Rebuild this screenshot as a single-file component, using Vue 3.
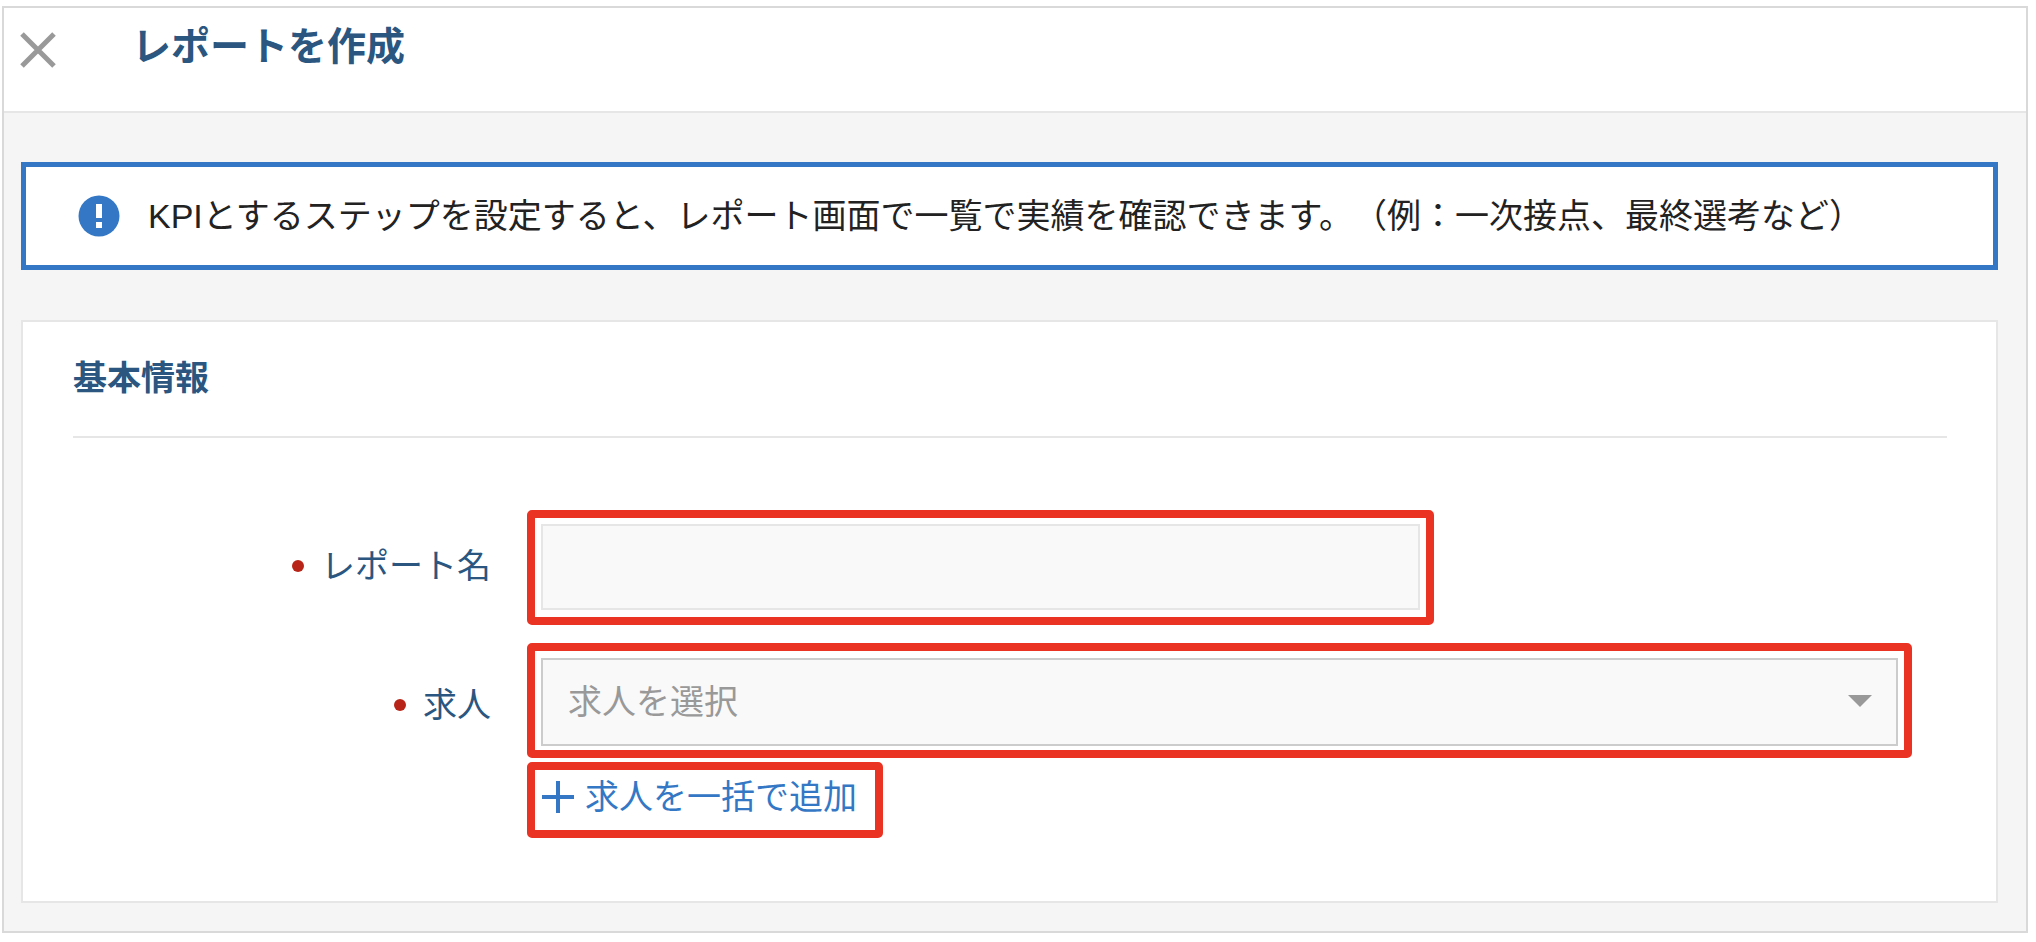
<script setup>
import { ref } from 'vue'

const reportName = ref('')
const job = ref('')
</script>

<template>
  <main class="modal">
    <header class="modal-header">
      <button class="close" type="button" aria-label="閉じる">
        <svg width="36" height="36" viewBox="0 0 36 36" aria-hidden="true">
          <path d="M2 2 34 34M34 2 2 34" fill="none" stroke="#999" stroke-width="5" />
        </svg>
      </button>
      <h1 class="title">レポートを作成</h1>
    </header>

    <div class="content">
      <div class="notice" role="note">
        <svg class="notice-icon" width="42" height="42" viewBox="0 0 42 42" aria-hidden="true">
          <circle cx="21" cy="21" r="20.5" fill="#3478c5" />
          <path d="M18 9h6v14h-6zM18 27h6v6h-6z" fill="#fff" />
        </svg>
        <p class="notice-text">KPIとするステップを設定すると、レポート画面で一覧で実績を確認できます。（例：一次接点、最終選考など）</p>
      </div>

      <section class="card">
        <h2 class="card-title">基本情報</h2>
        <form class="form" @submit.prevent>
          <div class="row">
            <label class="label" for="report-name"><span class="required"></span>レポート名</label>
            <div class="frame frame-name">
              <input id="report-name" v-model="reportName" class="control" type="text" />
            </div>
          </div>
          <div class="row row-job">
            <label class="label" for="job"><span class="required"></span>求人</label>
            <div class="fields">
              <div class="frame frame-job">
                <select id="job" v-model="job" class="control control-select">
                  <option value="">求人を選択</option>
                </select>
                <svg class="arrow" width="24" height="12" viewBox="0 0 24 12" aria-hidden="true">
                  <path d="M0 0h24L12 12z" fill="#999" />
                </svg>
              </div>
              <div class="frame frame-add">
                <button class="add" type="button">
                  <svg width="32" height="32" viewBox="0 0 32 32" aria-hidden="true">
                    <path d="M16 0v32M0 16h32" fill="none" stroke="#3478c5" stroke-width="4" />
                  </svg>
                  求人を一括で追加
                </button>
              </div>
            </div>
          </div>
        </form>
      </section>
    </div>
  </main>
</template>

<style>
body {
  background: #fff;
}
</style>

<style scoped>
* {
  box-sizing: border-box;
}

.modal {
  margin: 6px 8px 9px 2px;
  border: 2px solid #d9d9d9;
  background: #f5f5f5;
  color: #222;
  font-family: "Liberation Sans", "Noto Sans CJK JP", sans-serif;
  font-size: 34px;
  line-height: 48px;
  text-spacing-trim: space-all;
}

h1,
h2,
p {
  margin: 0;
}

button,
input,
select {
  font: inherit;
}

.modal-header {
  display: flex;
  align-items: flex-start;
  gap: 76px;
  padding: 12px 16px 37px;
  border-bottom: 2px solid #e6e6e6;
  background: #fff;
}

.close {
  display: flex;
  margin-top: 12px;
  padding: 0;
  border: 0;
  background: none;
  cursor: pointer;
}

.title {
  color: #2a567f;
  font-size: 39px;
  line-height: 54px;
  font-weight: 700;
}

.content {
  padding: 49px 28px 28px 17px;
}

.notice {
  display: flex;
  align-items: center;
  gap: 28px;
  padding: 25px 51px 25px 52px;
  border: 5px solid #3478c5;
  background: #fff;
}

.notice-icon {
  flex: none;
}

.card {
  margin-top: 50px;
  padding: 32px 49px 63px 50px;
  border: 2px solid #e6e6e6;
  background: #fff;
}

.card-title {
  padding-bottom: 34px;
  border-bottom: 2px solid #e6e6e6;
  color: #2a567f;
  font-size: 34px;
  font-weight: 700;
}

.form {
  display: flex;
  flex-direction: column;
  gap: 18px;
  margin-top: 72px;
  padding-right: 35px;
}

.row {
  display: grid;
  grid-template-columns: 418px minmax(0, 1fr);
  column-gap: 36px;
  align-items: start;
}

.label {
  display: flex;
  align-items: center;
  justify-content: flex-end;
  gap: 17px;
  padding-top: 32px;
  color: #2a567f;
}

.row-job .label {
  padding-top: 38px;
}

.required {
  width: 12px;
  height: 12px;
  border-radius: 50%;
  background: #b82518;
}

.fields {
  display: flex;
  flex-direction: column;
  align-items: flex-start;
  gap: 4px;
}

.frame {
  position: relative;
  border: 8px solid #ea3323;
  border-radius: 5px;
}

.frame-name {
  width: 65.5%;
  padding: 6px 6px 7px;
}

.frame-job {
  width: 100%;
  padding: 7px 6px 4px;
}

.control {
  display: block;
  width: 100%;
  height: 86px;
  padding: 0 25px;
  border: 2px solid #e6e6e6;
  border-radius: 0;
  outline: 0;
  background: #f9f9f9;
  color: #222;
}

.control-select {
  height: 88px;
  border-color: #ccc;
  color: #999;
  appearance: none;
}

.arrow {
  position: absolute;
  top: 44px;
  right: 32px;
  pointer-events: none;
}

.frame-add {
  padding: 3px 18px 9px 7px;
}

.add {
  display: flex;
  align-items: center;
  gap: 11px;
  padding: 0;
  border: 0;
  background: none;
  color: #3478c5;
  cursor: pointer;
}
</style>
